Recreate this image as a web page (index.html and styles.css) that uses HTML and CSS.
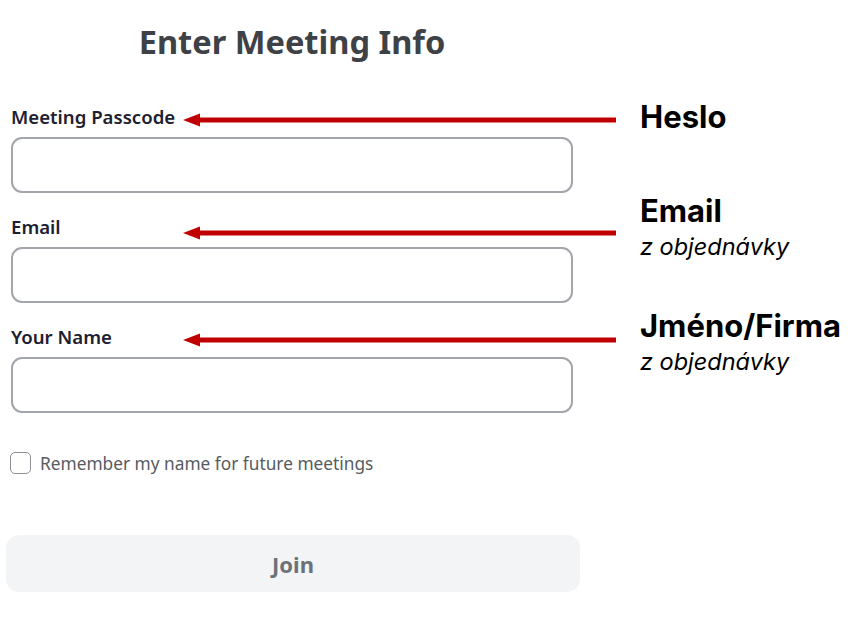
FILE: index.html
```html
<!DOCTYPE html>
<html lang="en">
<head>
<meta charset="utf-8">
<title>Enter Meeting Info</title>
<link rel="stylesheet" href="styles.css">
</head>
<body>
<main class="form">
  <h1 class="title">Enter Meeting Info</h1>

  <div class="field">
    <div class="label-row">
      <label class="label" for="pass">Meeting Passcode</label>
      <svg class="arrow" width="433" height="16" viewBox="0 0 433 16"><polygon points="0,8 17,1.5 17,14.5" fill="#c00000"/><rect x="12" y="5.5" width="421" height="5" fill="#c00000"/></svg>
    </div>
    <input class="input" id="pass" type="text">
    <div class="note note-pass"><div class="note-title">Heslo</div></div>
  </div>

  <div class="field">
    <div class="label-row">
      <label class="label" for="email">Email</label>
      <svg class="arrow arrow-low" width="433" height="16" viewBox="0 0 433 16"><polygon points="0,8 17,1.5 17,14.5" fill="#c00000"/><rect x="12" y="5.5" width="421" height="5" fill="#c00000"/></svg>
    </div>
    <input class="input" id="email" type="text">
    <div class="note note-email"><div class="note-title">Email</div><div class="note-sub">z objednávky</div></div>
  </div>

  <div class="field">
    <div class="label-row">
      <label class="label" for="name">Your Name</label>
      <svg class="arrow" width="433" height="16" viewBox="0 0 433 16"><polygon points="0,8 17,1.5 17,14.5" fill="#c00000"/><rect x="12" y="5.5" width="421" height="5" fill="#c00000"/></svg>
    </div>
    <input class="input" id="name" type="text">
    <div class="note note-name"><div class="note-title">Jméno/Firma</div><div class="note-sub">z objednávky</div></div>
  </div>

  <label class="remember"><span class="box"></span><span class="remember-text">Remember my name for future meetings</span></label>

  <button class="join" type="button">Join</button>
</main>
</body>
</html>
```

FILE: styles.css
```css
* { box-sizing: border-box; }
html, body { margin: 0; padding: 0; background: #ffffff; }
body {
  width: 856px;
  height: 625px;
  overflow: hidden;
  font-family: "Noto Sans", "Open Sans", sans-serif;
}
.form {
  display: flex;
  flex-direction: column;
  align-items: flex-start;
  width: 856px;
  padding: 22px 0 0 11px;
}
.title {
  margin: 0 0 43px 0;
  width: 562px;
  text-align: center;
  font-size: 32.6px;
  line-height: 40px;
  font-weight: 700;
  color: #3e4146;
}
.field {
  position: relative;
  display: flex;
  flex-direction: column;
  gap: 8px;
  margin-bottom: 22px;
}
.label-row {
  display: flex;
  align-items: center;
  height: 24px;
}
.label {
  flex: none;
  width: 172px;
  font-size: 18.6px;
  line-height: 24px;
  font-weight: 600;
  color: #1d2030;
}
.arrow { display: block; flex: none; margin-top: 5px; }
.arrow-low { margin-top: 12px; }
.input {
  width: 562px;
  height: 56px;
  border: 2px solid #a2a5aa;
  border-radius: 11px;
  background: #fff;
  outline: none;
}
.note {
  position: absolute;
  left: 629px;
  width: 230px;
  font-family: Inter, "Noto Sans", sans-serif;
  color: #000;
}
.note-pass { top: -4px; }
.note-email { top: -20px; }
.note-name { top: -15px; }
.note-title {
  font-size: 31px;
  line-height: 32px;
  font-weight: 700;
}
.note-sub {
  margin-top: 7px;
  font-size: 23.5px;
  line-height: 26px;
  font-style: italic;
  font-weight: 400;
}
.remember {
  display: flex;
  align-items: center;
  gap: 9px;
  margin: 17px 0 0 -1px;
  height: 22px;
}
.box {
  width: 21px;
  height: 22px;
  border: 1.5px solid #8d9096;
  border-radius: 5px;
  background: #fff;
}
.remember-text {
  font-size: 17.3px;
  color: #575b61;
}
.join {
  margin: 61px 0 0 -5px;
  width: 574px;
  height: 57px;
  border: none;
  border-radius: 13px;
  background: #f3f4f6;
  font-family: "Noto Sans", "Open Sans", sans-serif;
  font-size: 22px;
  font-weight: 700;
  color: #6c7179;
}
```
